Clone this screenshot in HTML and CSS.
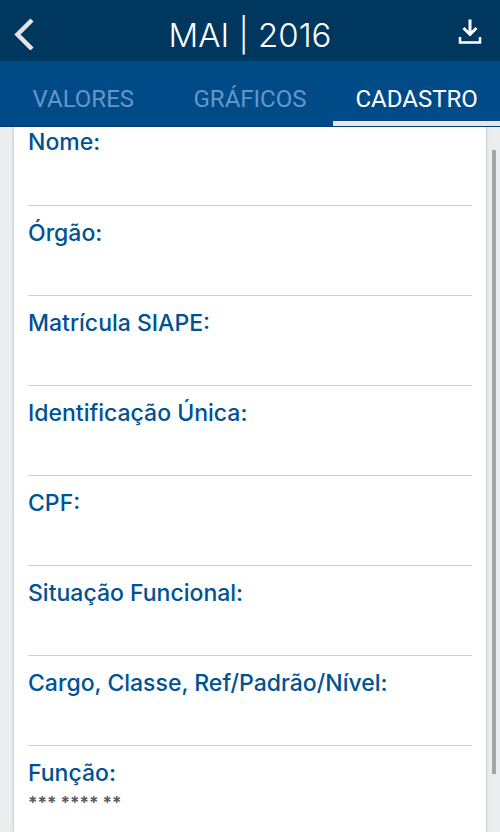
FILE: index.html
```
<!DOCTYPE html>
<html lang="pt-BR">
  <head>
    <meta charset="utf-8">
    <meta name="viewport" content="width=device-width, initial-scale=1">
    <title>MAI | 2016</title>
    <link rel="stylesheet" href="styles.css">
  </head>
  <body>
    <header class="topbar">
      <button class="icon-btn back" type="button" aria-label="Voltar">
        <svg width="20" height="32" viewBox="0 0 20 32">
          <path d="M18 2 L3.500 16.500 L18 31" fill="none" stroke="#e4e3e5" stroke-width="4.500"/>
        </svg>
      </button>
      <h1 class="title">MAI | 2016</h1>
      <button class="icon-btn download" type="button" aria-label="Baixar">
        <svg width="24" height="32" viewBox="0 0 24 32">
          <path d="M12 1.500 V16 M5.500 10 L12 16.500 L18.500 10" fill="none" stroke="#fff" stroke-width="3"/>
          <path d="M2 19 V24.500 H22 V19" fill="none" stroke="#fff" stroke-width="2.500"/>
        </svg>
      </button>
    </header>

    <nav class="tabs">
      <a class="tab" href="#valores">VALORES</a>
      <a class="tab" href="#graficos">GRÁFICOS</a>
      <a class="tab active" href="#cadastro">CADASTRO</a>
    </nav>

    <main class="content" id="cadastro">
      <dl class="card">
        <div class="field">
          <dt>Nome:</dt>
          <dd></dd>
        </div>
        <div class="field">
          <dt>Órgão:</dt>
          <dd></dd>
        </div>
        <div class="field">
          <dt>Matrícula SIAPE:</dt>
          <dd></dd>
        </div>
        <div class="field">
          <dt>Identificação Única:</dt>
          <dd></dd>
        </div>
        <div class="field">
          <dt>CPF:</dt>
          <dd></dd>
        </div>
        <div class="field">
          <dt>Situação Funcional:</dt>
          <dd></dd>
        </div>
        <div class="field">
          <dt>Cargo, Classe, Ref/Padrão/Nível:</dt>
          <dd></dd>
        </div>
        <div class="field">
          <dt>Função:</dt>
          <dd>*** **** **</dd>
        </div>
      </dl>
      <div class="scroll-thumb"></div>
    </main>
  </body>
</html>
```

FILE: styles.css
```
* {
  box-sizing: border-box;
}
body {
  margin: 0;
  height: 100vh;
  display: flex;
  flex-direction: column;
  overflow: hidden;
  background-color: #ebedef;
  font-family: Inter, "Liberation Sans", sans-serif;
}

/* top bar */
.topbar {
  display: flex;
  flex: none;
  align-items: center;
  justify-content: space-between;
  height: 61px;
  padding: 8px 14px 0;
  background-color: #00375f;
}
.icon-btn {
  display: flex;
  align-items: center;
  width: 44px;
  height: 44px;
  padding: 0 0 2px;
  border: 0;
  background: none;
}
.back {
  justify-content: flex-start;
}
.download {
  justify-content: flex-end;
  padding-right: 4px;
}
.title {
  margin: 0;
  color: #fff;
  font-size: 33px;
  font-weight: 300;
  line-height: 40px;
}

/* tabs */
.tabs {
  display: grid;
  flex: none;
  grid-template-columns: repeat(3, 1fr);
  height: 66px;
  background-color: #004b87;
  border-bottom: 1px solid #003d70;
}
.tab {
  padding-top: 22px;
  border-bottom: 5px solid transparent;
  color: #6496c8;
  font-family: Roboto, sans-serif;
  font-size: 24px;
  line-height: 32px;
  text-align: center;
  text-decoration: none;
}
.tab.active {
  border-bottom-color: #e6e6e6;
  color: #fff;
}

/* data card */
.content {
  position: relative;
  flex: 1;
  display: flex;
  min-height: 0;
  padding: 0 14px;
}
.card {
  flex: 1;
  margin: 0;
  padding: 0 14px;
  background-color: #fff;
  box-shadow: 0 0 3px #a9adb0;
  clip-path: inset(0 -4px);
}
.field {
  height: 90px;
  padding-top: 13px;
  border-bottom: 1px solid #cdcdcd;
}
.field:first-child {
  height: 79px;
  padding-top: 1px;
}
.field:last-child {
  border-bottom: 0;
}
dt {
  color: #005293;
  font-size: 23px;
  font-weight: 500;
  line-height: 28px;
}
dd {
  margin: 0;
  color: #5c5c5c;
  font-size: 17px;
  font-weight: 700;
  line-height: 32px;
}
.scroll-thumb {
  position: absolute;
  top: 23px;
  right: 4px;
  bottom: 58px;
  width: 4px;
  background-color: #a5a7a6;
}
```
